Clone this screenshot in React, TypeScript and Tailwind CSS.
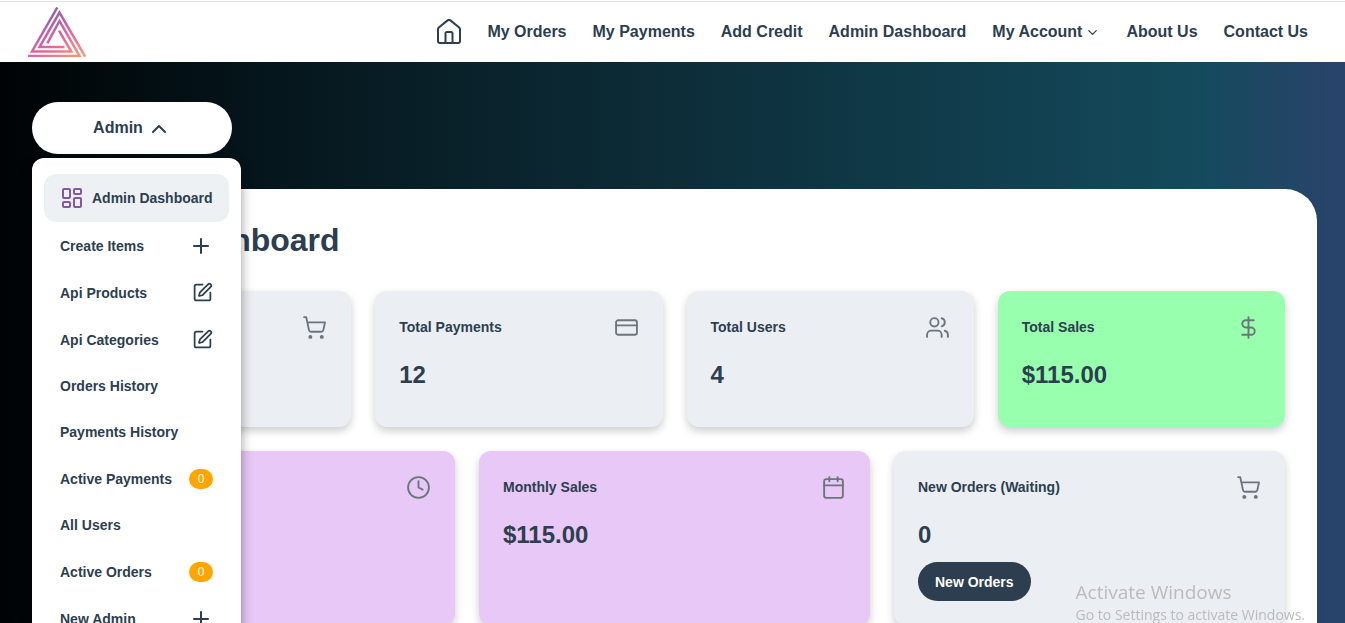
import React from "react";
import {
  Calendar,
  ChevronDown,
  ChevronUp,
  Clock,
  CreditCard,
  DollarSign,
  LayoutDashboard,
  Plus,
  ShoppingCart,
  SquarePen,
  Users,
  type LucideIcon,
} from "lucide-react";

function Logo() {
  return (
    <svg viewBox="0 0 58 50" className="h-[50px] w-[58px]" fill="none" strokeWidth="2.5">
      <defs>
        <linearGradient id="logo" x1="14" y1="4" x2="48" y2="56" gradientUnits="userSpaceOnUse">
          <stop offset="0" stopColor="#7b62b8" />
          <stop offset="0.5" stopColor="#df62a0" />
          <stop offset="1" stopColor="#ff9a70" />
        </linearGradient>
      </defs>
      <g stroke="url(#logo)">
        <path d="M29.300 .5L4 44.500H43.300L31 23.700" />
        <path d="M0 49H51.500L31.500 14L19.300 36.300" />
        <path d="M57.300 49.800L31.500 5.500L11.500 40H36.500" />
      </g>
    </svg>
  );
}

function HomeIcon() {
  return (
    <svg viewBox="0 0 24 26" className="h-[26px] w-6" fill="none" stroke="#2c3e50" strokeWidth="2" strokeLinejoin="round">
      <path d="M1 10.300Q1 9.300 1.800 8.500L10.600 1.400Q12 .4 13.400 1.400L22.200 8.500Q23 9.300 23 10.300V22Q23 24 21 24H3Q1 24 1 22Z" />
      <path d="M8.500 24V14.500Q8.500 13 10 13H14Q15.500 13 15.500 14.500V24" />
    </svg>
  );
}

const links = ["My Orders", "My Payments", "Add Credit", "Admin Dashboard", "My Account", "About Us", "Contact Us"];

type MenuItem = { label: string; icon?: LucideIcon; iconSize?: string; badge?: string };

const menu: MenuItem[] = [
  { label: "Create Items", icon: Plus, iconSize: "size-6" },
  { label: "Api Products", icon: SquarePen, iconSize: "size-[21px]" },
  { label: "Api Categories", icon: SquarePen, iconSize: "size-[21px]" },
  { label: "Orders History" },
  { label: "Payments History" },
  { label: "Active Payments", badge: "0" },
  { label: "All Users" },
  { label: "Active Orders", badge: "0" },
  { label: "New Admin", icon: Plus, iconSize: "size-6" },
];

type CardProps = { title: string; value: string; icon: LucideIcon; tone?: string; action?: string };

function Card({ title, value, icon: Icon, tone = "bg-[#ebeef3]", action }: CardProps) {
  return (
    <article className={`flex-1 rounded-xl p-6 shadow-[0_4px_8px_rgba(0,0,0,0.2)] ${tone}`}>
      <div className="flex h-6 items-center justify-between">
        <h2 className="text-sm font-bold">{title}</h2>
        <Icon className="size-[25px] text-[#6c757d]" strokeWidth={1.8} />
      </div>
      <p className="mt-5 text-2xl font-bold">{value}</p>
      {action && (
        <button className="mt-[11px] h-[39px] rounded-full bg-[#2c3e50] px-[17px] text-sm font-bold text-white">{action}</button>
      )}
    </article>
  );
}

export default function App() {
  return (
    <div className="flex h-screen flex-col overflow-hidden font-['Liberation_Sans',Arial,sans-serif] text-[#2c3e50]">
      <header className="flex h-[62px] shrink-0 items-center justify-between border-t border-white bg-white pr-[37px] pl-7 shadow-[inset_0_1px_0_#dfe3e6]">
        <a href="#" aria-label="Home page">
          <Logo />
        </a>
        <nav className="flex items-center gap-[26px] font-bold">
          <a href="#" aria-label="Home">
            <HomeIcon />
          </a>
          {links.map((label) => (
            <a key={label} href="#" className="flex items-center gap-[3px]">
              {label}
              {label === "My Account" && <ChevronDown className="mt-[2px] size-[15px]" />}
            </a>
          ))}
        </nav>
      </header>

      <main className="min-h-0 flex-1 bg-[linear-gradient(to_right,#000304_0%,#05161c_20%,#0b2731_42%,#144a5c_89%,#28446a_99%)] pt-10 pr-7 pl-8">
        <div className="relative z-10 w-[200px]">
          <button className="flex h-[52px] w-full items-center justify-center gap-1 rounded-full bg-white font-bold" aria-expanded="true">
            Admin
            <ChevronUp className="mt-[2px] size-6" />
          </button>
          <nav className="absolute top-14 left-0 w-[209px] rounded-t-xl bg-white px-3 pt-4 pb-6 text-sm font-bold shadow-[0_4px_12px_rgba(0,0,0,0.4)]">
            <a href="#" className="flex h-12 items-center gap-2 rounded-xl bg-[#eef1f4] px-4 whitespace-nowrap">
              <LayoutDashboard className="size-6 shrink-0 text-[#8458a8]" />
              Admin Dashboard
            </a>
            {menu.map(({ label, icon: Icon, iconSize, badge }) => (
              <a
                key={label}
                href="#"
                className={`flex items-center justify-between px-4 ${Icon || badge ? "h-[47px]" : "h-[46px]"}`}
              >
                {label}
                {Icon && <Icon className={iconSize} />}
                {badge && (
                  <span className="flex h-5 w-6 items-center justify-center rounded-full bg-[#ffa500] text-xs font-normal text-white">
                    {badge}
                  </span>
                )}
              </a>
            ))}
          </nav>
        </div>

        <section className="mt-[35px] h-[620px] rounded-t-[32px] bg-white px-8 pt-8">
          <h1 className="text-[32px] leading-[38px] font-bold">Admin Dashboard</h1>
          <div className="mt-8 flex h-[136px] gap-6">
            <Card title="Total Orders" value="12" icon={ShoppingCart} />
            <Card title="Total Payments" value="12" icon={CreditCard} />
            <Card title="Total Users" value="4" icon={Users} />
            <Card title="Total Sales" value="$115.00" icon={DollarSign} tone="bg-[#98ffae]" />
          </div>
          <div className="mt-6 flex h-[174px] gap-6">
            <Card title="Today Sales" value="$0.00" icon={Clock} tone="bg-[#e7c8f6]" />
            <Card title="Monthly Sales" value="$115.00" icon={Calendar} tone="bg-[#e7c8f6]" />
            <Card title="New Orders (Waiting)" value="0" icon={ShoppingCart} action="New Orders" />
          </div>
        </section>
      </main>

      <aside className="pointer-events-none fixed right-10 bottom-0 z-20 font-['Open_Sans','Noto_Sans',sans-serif] text-[#b9bbbe]">
        <p className="text-[19px] leading-[30px]">Activate Windows</p>
        <p className="text-sm leading-4">Go to Settings to activate Windows.</p>
      </aside>
    </div>
  );
}
